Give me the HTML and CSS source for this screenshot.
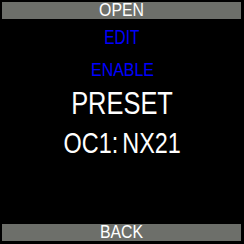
FILE: index.html
```html
<!DOCTYPE html>
<html lang="en">
<head>
  <meta charset="UTF-8">
  <meta name="viewport" content="width=device-width, initial-scale=1.0">
  <title>Preset Menu</title>
  <link rel="stylesheet" href="styles.css">
</head>
<body>
<div class="screen">
  <div class="bar"><span class="txt">OPEN</span></div>
  <div class="menu">
    <div class="item edit"><span class="txt">EDIT</span></div>
    <div class="item enable"><span class="txt">ENABLE</span></div>
    <div class="title preset"><span class="txt">PRESET</span></div>
    <div class="title name"><span class="txt">OC1: NX21</span></div>
  </div>
  <div class="bar"><span class="txt">BACK</span></div>
</div>
</body>
</html>
```

FILE: styles.css
```css
html, body {
  margin: 0;
  padding: 0;
  background: #000;
}
.screen {
  width: 244px;
  height: 244px;
  display: flex;
  flex-direction: column;
  font-family: "Liberation Sans", Arial, sans-serif;
  color: #fff;
  text-align: center;
  -webkit-font-smoothing: none;
}
.txt {
  display: inline-block;
  transform: scaleX(0.82);
}
.bar {
  margin: 2px 3px 0 2px;
  height: 17px;
  line-height: 17px;
  background: #6d6f6a;
  font-size: 18px;
}
.bar .txt {
  transform: scaleX(0.88);
}
.bar:last-child {
  margin-bottom: 3px;
}
.menu {
  flex: 1;
  padding-top: 3px;
}
.item {
  color: #0000ff;
}
.edit {
  font-size: 20px;
  line-height: 31px;
}
.edit .txt {
  transform: scaleX(0.77);
}
.enable {
  font-size: 19px;
  line-height: 33px;
}
.enable .txt {
  transform: scaleX(0.84);
}
.preset {
  font-size: 31px;
  line-height: 35px;
}
.name {
  font-size: 30px;
  line-height: 44px;
}
.name .txt {
  word-spacing: -3px;
  transform: scaleX(0.78);
}
```
